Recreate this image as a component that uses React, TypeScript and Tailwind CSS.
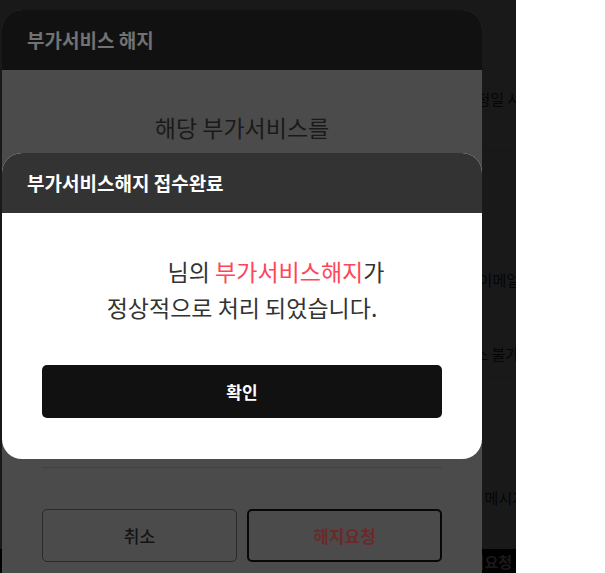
import React from "react";

function BackgroundPage() {
  return (
    <div className="flex h-full flex-col overflow-hidden bg-white text-[15px] leading-[22px] text-[#333]">
      {/* Header */}
      <div className="h-[69px] shrink-0 border-b border-[#e5e5e5] bg-[#f7f7f7]" />

      {/* Notice */}
      <div className="flex h-[83px] shrink-0 items-start justify-end border-b border-[#e5e5e5] pt-[19px]">
        <p className="-mr-[19px] whitespace-nowrap">부가서비스 해지 시 당월 이용 요금은 해지 신청일 사용</p>
      </div>

      <div className="flex h-[178px] shrink-0 items-start justify-end pt-[117px]">
        <p className="-mr-[4px] whitespace-nowrap">해지 완료 안내는 가입 시 등록하신 이메일</p>
      </div>

      <div className="flex h-[47px] shrink-0 items-center justify-end border-y border-[#e5e5e5] bg-[#fafafa]">
        <p className="-mr-[3px] whitespace-nowrap">해지 신청 후에는 취소 불가</p>
      </div>
      <div className="h-[20px] shrink-0 border-b border-[#e5e5e5]" />

      <div className="flex h-[152px] shrink-0 items-start justify-end pt-[90px]">
        <p className="-mr-[10px] whitespace-nowrap">해지 처리 결과는 문자 메시지</p>
      </div>

      {/* Bottom bar */}
      <div className="mt-auto flex h-[24px] shrink-0 items-start justify-end bg-black pr-[4px] pt-[2px]">
        <span className="text-[15px] font-bold text-white">해지요청</span>
      </div>
    </div>
  );
}

export default function App() {
  return (
    <div className="relative h-[573px] w-full overflow-hidden bg-white font-['Noto_Sans_CJK_KR','Noto_Sans',sans-serif]">
      <div className="relative h-full w-[516px] overflow-hidden">
        <BackgroundPage />

        {/* Dimmed overlay */}
        <div className="absolute inset-0 bg-black/90" />

        {/* Underlying dialog (dimmed) */}
        <div className="absolute left-[2px] top-[10px] flex h-[620px] w-[480px] flex-col overflow-hidden rounded-t-[20px] bg-[#4b4b4b]">
          <div className="flex h-[60px] items-center bg-[#111111] px-[25px]">
            <h2 className="text-[19px] font-bold text-[#727272]">부가서비스 해지</h2>
          </div>
          <div className="flex flex-1 flex-col px-[40px]">
            <p className="pt-[42px] text-center text-[23px] leading-[30px] text-[#1a1a1a]">해당 부가서비스를</p>
            <div className="mt-[325px] border-t border-[#404040]" />
            <div className="mt-[41px] grid grid-cols-2 gap-[10px]">
              <button className="h-[53px] rounded-[5px] border border-[#2a2a2a] text-[17px] font-medium text-[#141414]">
                취소
              </button>
              <button className="h-[53px] rounded-[5px] border-2 border-[#080808] text-[17px] font-bold text-[#6b2a2a]">
                해지요청
              </button>
            </div>
          </div>
        </div>

        {/* Completion dialog */}
        <div className="absolute left-[2px] top-[153px] w-[480px] overflow-hidden rounded-[20px] bg-white">
          <div className="flex h-[60px] items-center bg-[#333333] px-[25px]">
            <h2 className="text-[19px] font-bold text-white">부가서비스해지 접수완료</h2>
          </div>
          <div className="px-[40px] pt-[40px] pb-[41px]">
            <p className="text-center text-[23px] leading-[36px] text-[#333]">
              <span className="inline-block w-[68px]" />
              님의 <span className="text-[#ff4658]">부가서비스해지</span>가
              <br />
              정상적으로 처리 되었습니다.
            </p>
            <button className="mt-[40px] h-[53px] w-full rounded-[5px] bg-[#111111] text-[17px] font-bold text-white">
              확인
            </button>
          </div>
        </div>
      </div>
    </div>
  );
}
